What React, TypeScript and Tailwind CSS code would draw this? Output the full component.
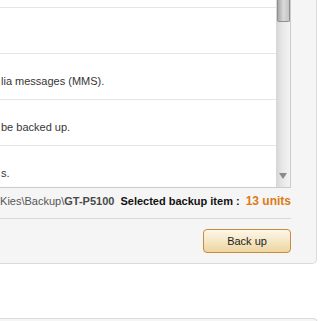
import React from 'react';

const rows = ['', '', 'lia messages (MMS).', 'be backed up.', 's.'];

const ScrollBar: React.FC = () => (
  <div className="w-[14px] flex flex-col bg-linear-to-r from-[#d6d6d6] via-[#e9e9e9] to-[#f3f3f3]">
    {/* thumb */}
    <div className="ml-[1px] w-[13px] h-[22px] rounded-b-[2px] border border-t-0 border-[#8f8f8f] bg-linear-to-r from-[#a9a9a9] via-[#d9d9d9] to-[#c4c4c4]" />
    <div className="flex-1" />
    {/* down arrow */}
    <div className="h-[22px] flex items-center justify-center">
      <div className="w-0 h-0 border-l-[4px] border-r-[4px] border-t-[6px] border-l-transparent border-r-transparent border-t-[#8a8a8a]" />
    </div>
  </div>
);

const App: React.FC = () => {
  return (
    <div className="w-[321px] h-[321px] overflow-hidden bg-white font-['Liberation_Sans',Arial,sans-serif]">
      {/* backup panel */}
      <div className="w-[317px] h-[264px] flex flex-col pr-[25px] bg-[#f5f5f5] border-r border-b border-[#dadada] rounded-br-[5px]">
        {/* item list */}
        <div className="h-[188px] flex bg-white border-r border-b border-[#cbcbcb]">
          <div className="flex-1 overflow-hidden">
            <div className="-mt-[38px]">
              {rows.map((text, i) => (
                <div
                  key={i}
                  className="h-[46px] border-b border-[#e6e6e6] pt-[21px] pl-[1px] text-[11px] leading-[13px] text-[#363636] whitespace-nowrap"
                >
                  {text}
                </div>
              ))}
            </div>
          </div>
          <ScrollBar />
        </div>

        {/* save path + count */}
        <div className="h-[31px] flex items-baseline justify-end pt-[7px] border-b border-[#d9d9d9] overflow-hidden whitespace-nowrap">
          <span className="text-[11px] leading-[13px] text-[#555]">{'Kies\\Backup\\'}</span>
          <span className="text-[11px] leading-[13px] font-bold text-[#4a4a4a]">GT-P5100</span>
          <span className="ml-[6px] text-[11px] leading-[13px] font-bold text-[#111]">Selected backup item :</span>
          <span className="ml-[6px] text-[12px] leading-[13px] font-bold text-[#dd7a14]">13 units</span>
        </div>

        {/* actions */}
        <div className="flex-1 flex justify-end items-start pt-[10px]">
          <button className="w-[88px] h-[24px] rounded-[4px] border border-[#c98b3e] bg-linear-to-b from-[#fdf7e9] to-[#eed5a0] text-[11px] text-[#1e1e1e]">
            Back up
          </button>
        </div>
      </div>

      {/* next panel */}
      <div className="mt-[54px] w-[318px] h-[12px] bg-[#f5f5f5] border-t border-r border-[#dadada] rounded-tr-[5px]" />
    </div>
  );
};

export default App;
